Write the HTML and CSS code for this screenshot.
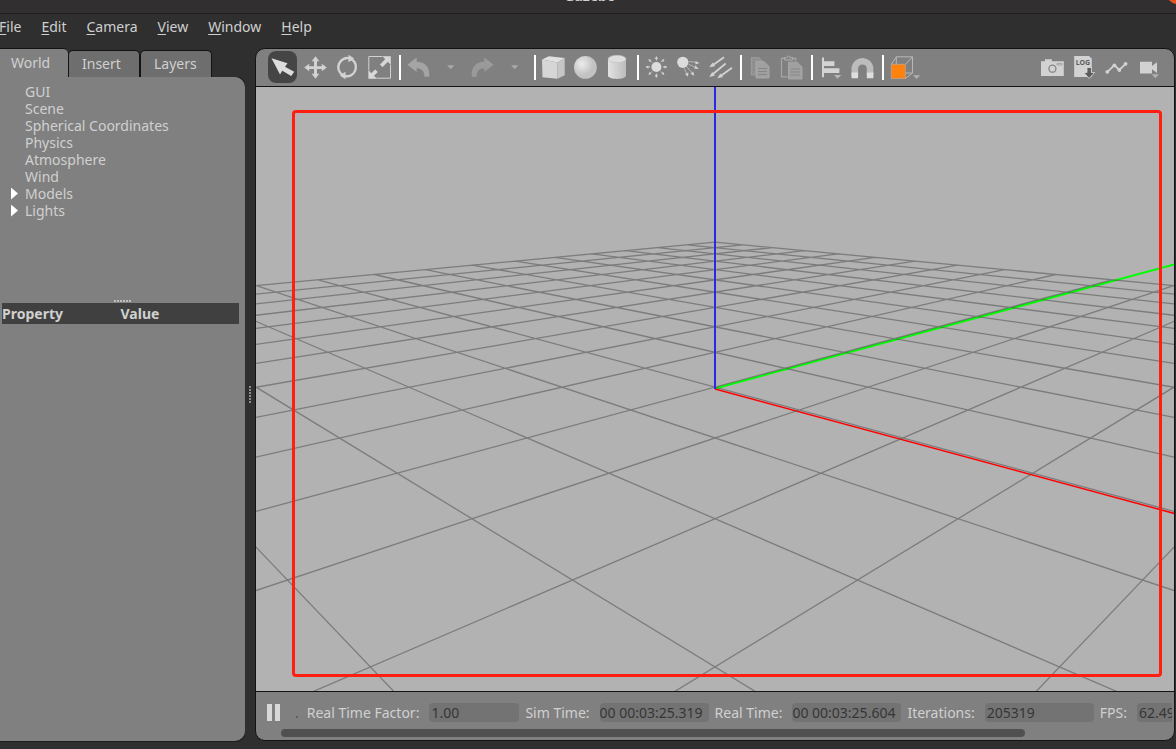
FILE: index.html
```html
<!DOCTYPE html>
<html lang="en">

<head>
    <meta charset="utf-8">
    <meta name="viewport" content="width=device-width, initial-scale=1.0">
    <title>Gazebo</title>
    <link rel="stylesheet" href="styles.css">
</head>

<body>
    <header class="titlebar">
        <span class="title">Gazebo</span>
        <button class="close" aria-label="Close"></button>
    </header>

    <nav class="menubar">
        <button><u>F</u>ile</button>
        <button><u>E</u>dit</button>
        <button><u>C</u>amera</button>
        <button><u>V</u>iew</button>
        <button><u>W</u>indow</button>
        <button><u>H</u>elp</button>
    </nav>

    <div class="workspace">
        <aside class="sidebar">
            <div class="tabs" role="tablist">
                <button class="tab active" role="tab" aria-selected="true">World</button>
                <button class="tab" role="tab" aria-selected="false">Insert</button>
                <button class="tab" role="tab" aria-selected="false">Layers</button>
            </div>
            <div class="panel">
                <ul class="tree">
                    <li><button>GUI</button></li>
                    <li><button>Scene</button></li>
                    <li><button>Spherical Coordinates</button></li>
                    <li><button>Physics</button></li>
                    <li><button>Atmosphere</button></li>
                    <li><button>Wind</button></li>
                    <li><button class="folder">Models</button></li>
                    <li><button class="folder">Lights</button></li>
                </ul>
                <div class="grip"></div>
                <table class="properties">
                    <thead>
                        <tr><th class="name">Property</th><th>Value</th></tr>
                    </thead>
                </table>
            </div>
        </aside>

        <div class="splitter"></div>

        <main class="viewer">
            <div class="toolbar">
                <button class="tool selected" aria-label="Select">
                    <svg viewBox="0 0 32 32"><path d="M4.5 7.3L20.5 12.3L18 15.8L27.2 20.8L24.2 25L15.3 19.8L13 23.5Z" fill="#dcdcdc"/></svg>
                </button>
                <button class="tool" aria-label="Translate">
                    <svg viewBox="0 0 32 32"><path d="M16.5 5.3L20.3 10.3H18V15.2H22.8V12.8L27.8 16.5L22.8 20.3V18H18V22.8H20.3L16.5 27.8L12.7 22.8H15V18H10.2V20.3L5.2 16.5L10.2 12.8V15.2H15V10.3H12.7Z" fill="#d2d2d2"/></svg>
                </button>
                <button class="tool" aria-label="Rotate">
                    <svg viewBox="0 0 32 32"><path d="M11.5 24A9.2 9.2 0 0 1 18.5 7.3M20.5 8.2A9.2 9.2 0 0 1 13.5 25" fill="none" stroke="#d2d2d2" stroke-width="2.4"/><path d="M17.5 3.8L23.2 7.5L17.5 11.3ZM14.5 20.8L8.8 24.5L14.5 28.2Z" fill="#d2d2d2"/></svg>
                </button>
                <button class="tool" aria-label="Scale">
                    <svg viewBox="0 0 32 32"><path d="M5.8 5.5H27.5V27.2H5.8Z" fill="none" stroke="#d2d2d2"/><path d="M28 5V14.2L24.8 11L19.5 16.2L16.8 13.5L22 8.2L18.8 5ZM5.2 28V18.8L8.4 22L12.2 18.2L15 21L11.2 24.8L14.4 28Z" fill="#d8d8d8" stroke="#808080" stroke-width=".4"/></svg>
                </button>
                <span class="line"></span>
                <button class="tool dim" aria-label="Undo">
                    <svg viewBox="0 0 32 32"><path d="M5.3 13.8L14.7 6.5V10.7C22.5 10.7 28 15.5 27.3 25.7H22.4C22.4 20 19.5 17.2 14.7 17.2V21Z" fill="#a4a4a4"/></svg>
                </button>
                <button class="tool" aria-label="Undo history">
                    <svg viewBox="0 0 32 32"><path d="M13 14.2H20.4L16.7 18.2Z" fill="#a8a8a8"/></svg>
                </button>
                <button class="tool dim" aria-label="Redo">
                    <svg viewBox="0 0 32 32"><path d="M27.7 13.8L18.3 6.5V10.7C10.5 10.7 5 15.5 5.7 25.7H10.6C10.6 20 13.5 17.2 18.3 17.2V21Z" fill="#9a9a9a"/></svg>
                </button>
                <button class="tool" aria-label="Redo history">
                    <svg viewBox="0 0 32 32"><path d="M13 14.2H20.4L16.7 18.2Z" fill="#a8a8a8"/></svg>
                </button>
                <span class="line"></span>
                <button class="tool" aria-label="Box">
                    <svg viewBox="0 0 32 32"><path d="M5 8.5L12 5.3L27.7 7L20.5 11.5Z" fill="#e0e0e0"/><path d="M5 8.5L20.5 11.5V27.8L5.5 26.3Z" fill="#d6d6d6"/><path d="M20.5 11.5L27.7 7V24.3L20.5 27.8Z" fill="#c6c6c6"/></svg>
                </button>
                <button class="tool" aria-label="Sphere">
                    <svg viewBox="0 0 32 32"><defs><radialGradient id="ball" cx=".35" cy=".35"><stop offset="0" stop-color="#ececec"/><stop offset="1" stop-color="#c2c2c2"/></radialGradient></defs><circle cx="16.4" cy="16.4" r="11.4" fill="url(#ball)"/></svg>
                </button>
                <button class="tool" aria-label="Cylinder">
                    <svg viewBox="0 0 32 32"><defs><linearGradient id="can"><stop offset="0" stop-color="#e2e2e2"/><stop offset="1" stop-color="#bcbcbc"/></linearGradient></defs><path d="M7 8V24.5C7 29 25 29 25 24.5V8Z" fill="url(#can)"/><ellipse cx="16" cy="8" rx="9" ry="3.7" fill="#dedede" stroke="#bdbdbd" stroke-width=".6"/></svg>
                </button>
                <span class="line"></span>
                <button class="tool" aria-label="Point light">
                    <svg viewBox="0 0 32 32"><circle cx="16.4" cy="16" r="5" fill="#dcdcdc"/><path d="M16.4 9.5V6M16.4 22.5V26M9.9 16H6.4M22.9 16H26.4M11.8 11.4L9.6 9.2M21 11.4L23.2 9.2M11.8 20.6L9.6 22.8M21 20.6L23.2 22.8" stroke="#d2d2d2" stroke-width="1"/><path d="M16.4 5L18 8H14.8ZM16.4 27L18 24H14.8ZM5.4 16L8.4 14.4V17.6ZM27.4 16L24.4 14.4V17.6ZM8.4 8L11.4 9L9.4 11ZM24.4 8L21.4 9L23.4 11ZM8.4 24L11.4 23L9.4 21ZM24.4 24L21.4 23L23.4 21Z" fill="#d2d2d2"/></svg>
                </button>
                <button class="tool" aria-label="Spot light">
                    <svg viewBox="0 0 32 32"><circle cx="10.8" cy="11.3" r="5.6" fill="#dcdcdc"/><path d="M17 10.5L24 11.3M16.5 13.2L23.5 16.4M14.8 15.8L20 21.7M12.3 17.4L14.7 22.5" stroke="#c4c4c4" stroke-width=".8"/><path d="M27.5 12L23.5 10V13.6ZM26.8 18L23.5 14.4L22.2 17.8ZM22.3 24.8L21.3 20.4L18.4 22.8ZM16 25.8L16.4 21.5L13 23Z" fill="#d2d2d2"/></svg>
                </button>
                <button class="tool" aria-label="Directional light">
                    <svg viewBox="0 0 32 32"><path d="M20 6.3L9 14M21.7 12.5L9 23M28 16.7L17 24.7" stroke="#d2d2d2" stroke-width="1.8"/><path d="M5.2 16.3L8.6 11.6L11 15.2ZM5.2 26L8.2 21L11 24.5ZM13.2 27.3L16.4 22.4L19 26Z" fill="#d2d2d2"/></svg>
                </button>
                <span class="line"></span>
                <button class="tool" aria-label="Copy">
                    <svg viewBox="0 0 32 32"><path d="M8.3 6.7H16L21 11.5V24H8.3Z" fill="#919191" stroke="#a2a2a2" stroke-width=".8"/><path d="M13 10.7H21L26 15.5V27H13Z" fill="#a0a0a0" stroke="#acacac" stroke-width=".8"/><path d="M10 11.5H12M10 15H12M10 18.5H12M15 17.5H24M15 20.5H24M15 23.5H24" stroke="#868686" stroke-width="1"/></svg>
                </button>
                <button class="tool" aria-label="Paste">
                    <svg viewBox="0 0 32 32"><path d="M12.5 25.8H6.5V7.3H10.5M17 7.3H20.8V10" fill="none" stroke="#a6a6a6" stroke-width="1.2"/><path d="M9.5 9V6.5H11.5Q13.5 3.8 15.8 6.5H18V9Z" fill="#858585" stroke="#adadad" stroke-width="1"/><path d="M13.5 11.2H22L27 16V28H13.5Z" fill="#a0a0a0" stroke="#acacac" stroke-width=".8"/><path d="M15.5 18H25M15.5 21H25M15.5 24H25" stroke="#868686" stroke-width="1"/></svg>
                </button>
                <span class="line"></span>
                <button class="tool" aria-label="Align">
                    <svg viewBox="0 0 32 32"><path d="M8 6.5H10V10.3H20.4V15H10V17.3H25.4V22H10V26.3H8Z" fill="#d4d4d4"/><path d="M20 24H27.3L23.6 27.8Z" fill="#b8b8b8"/></svg>
                </button>
                <button class="tool" aria-label="Snap">
                    <svg viewBox="0 0 32 32"><path d="M8.8 24V17A7.7 7.7 0 0 1 24.1 17V24" fill="none" stroke="#bcbcbc" stroke-width="6.6"/><path d="M5.5 21.5H12.1V27.3H5.5ZM20.8 21.5H27.4V27.3H20.8Z" fill="#dedede"/></svg>
                </button>
                <span class="line"></span>
                <button class="tool wide" aria-label="View angle">
                    <svg viewBox="0 0 40 32"><path d="M11.3 5.8H27.5V22H11.3ZM6.3 13.5L11.3 5.8M20.3 13.5L27.5 5.8M20.3 27.5L27.5 22" fill="none" stroke="#bdbdbd" stroke-width=".9"/><path d="M6.2 13.3H20.4V27.6H6.2Z" fill="#ff820f" stroke="#b9b0a8" stroke-width=".6"/><path d="M28 24.2H35.2L31.6 28Z" fill="#b0b0b0"/></svg>
                </button>

                <button class="tool first-right" aria-label="Screenshot">
                    <svg viewBox="0 0 32 32"><path d="M5 10.2H9V8.3H15.8V10.2H27.8V25H5Z" fill="#d2d2d2"/><circle cx="16.4" cy="17.7" r="3.5" fill="none" stroke="#858585" stroke-width="1.3"/><path d="M21 12.4H26V14H21Z" fill="none" stroke="#949494" stroke-width=".7"/></svg>
                </button>
                <button class="tool" aria-label="Log data">
                    <svg viewBox="0 0 32 32"><path d="M6.2 5H21L23.8 7.8V26H6.2Z" fill="#d2d2d2"/><text x="7.8" y="13.8" class="log">LOG</text><path d="M19 16.5H23.4V21.5H26.6L21.2 27.5L15.8 21.5H19Z" fill="#5c5c5c" stroke="#dcdcdc" stroke-width=".8"/></svg>
                </button>
                <button class="tool" aria-label="Plot">
                    <svg viewBox="0 0 32 32"><path d="M7.3 20.8L14.4 14.3L19.3 19L25.6 12.8" fill="none" stroke="#d2d2d2" stroke-width="1.8"/><g fill="#d2d2d2"><circle cx="7.3" cy="20.8" r="1.9"/><circle cx="14.4" cy="14.3" r="1.9"/><circle cx="19.3" cy="19" r="1.9"/><circle cx="25.6" cy="12.8" r="1.9"/></g></svg>
                </button>
                <button class="tool" aria-label="Record video">
                    <svg viewBox="0 0 32 32"><path d="M8 10.8H20V15L25 11.3V22L20 18.3V22.4H8Z" fill="#d2d2d2"/><path d="M19.6 23.3H27L23.3 27.2Z" fill="#b0b0b0"/></svg>
                </button>
            </div>

            <div class="scene">
                <svg class="world" viewBox="0 0 918 604" preserveAspectRatio="xMidYMid slice">
                    <path class="axis-y" d="M459 301.500L927 175"/>
                    <path class="axis-x" d="M459 302L927 428.800"/>
                    <path class="ground"/>
                    <path class="axis-z" d="M459 0V302"/>
                </svg>
                <div class="highlight"></div>
            </div>

            <div class="statusbar">
                <div class="status">
                    <button class="pause" aria-label="Pause"></button>
                    <span class="more">.</span>
                    <label for="factor">Real Time Factor:</label>
                    <input id="factor" class="short" value="1.00" readonly>
                    <label for="sim">Sim Time:</label>
                    <input id="sim" class="time" value="00 00:03:25.319" readonly>
                    <label for="real">Real Time:</label>
                    <input id="real" class="time" value="00 00:03:25.604" readonly>
                    <label for="iterations">Iterations:</label>
                    <input id="iterations" value="205319" readonly>
                    <label for="fps">FPS:</label>
                    <input id="fps" value="62.49" readonly>
                </div>
                <div class="scroll"></div>
            </div>
        </main>
    </div>

    <script>
        // camera looks along the diagonal of the ground plane
        const centerX = 459;
        const horizon = 77;
        const distance = 5.394;
        const size = 10;

        function project(i, j) {
            const depth = distance + (i + j) / 2;
            const x = centerX + 412.5 * (i - j) / depth;
            const y = horizon + 1204 / depth;
            return x.toFixed(1) + " " + y.toFixed(1);
        }

        function drawGround() {
            let d = "";
            for (let i = -size; i <= size; i++) {
                // stay in front of the camera
                const near = Math.max(-size, -9.6 - i);
                d += `M${project(i, near)}L${project(i, size)}`;
                d += `M${project(near, i)}L${project(size, i)}`;
            }
            document.querySelector(".ground").setAttribute("d", d);
        }

        drawGround();
    </script>
</body>

</html>
```

FILE: styles.css
```css
* {
    box-sizing: border-box;
}

body {
    display: flex;
    flex-direction: column;
    height: 100vh;
    margin: 0;
    overflow: hidden;
    background-color: #2f2f2f;
    color: #d0d0d0;
    font-family: "Noto Sans", "Open Sans", sans-serif;
    font-size: 14px;
}

button,
input {
    padding: 0;
    border: 0;
    background: none;
    color: inherit;
    font: inherit;
}

/* title bar */
.titlebar {
    position: relative;
    display: flex;
    justify-content: center;
    align-items: flex-start;
    flex: none;
    height: 14px;
    padding-left: 4px;
    overflow: hidden;
    background-color: #322f30;
    border-bottom: 1px solid #1e1e1e;
}

.title {
    margin-top: -14px;
    font-weight: bold;
    line-height: 20px;
}

.close {
    position: absolute;
    top: -16px;
    right: -11px;
    width: 20px;
    height: 20px;
    border-radius: 50%;
    background-color: #e95420;
}

/* menu */
.menubar {
    display: flex;
    flex: none;
    gap: 20px;
    height: 34px;
    margin-left: -1px;
}

.menubar button {
    height: 26px;
    line-height: 26px;
}

.menubar u {
    text-underline-offset: 2px;
}

.workspace {
    display: flex;
    flex: 1;
    min-height: 0;
    padding: 0 1px 8px 0;
}

/* left side */
.sidebar {
    display: flex;
    flex-direction: column;
    flex: none;
    width: 245px;
}

.tabs {
    display: flex;
    align-items: flex-end;
    height: 29px;
}

.tab {
    width: 72px;
    height: 27px;
    padding: 0 0 2px 13px;
    border: 1px solid #131313;
    border-bottom: 0;
    border-radius: 5px 5px 0 0;
    background-color: #6e6e6e;
    text-align: left;
}

.tab.active {
    width: 68px;
    height: 29px;
    padding-left: 11px;
    border-width: 1px 0 0;
    border-radius: 0 5px 0 0;
    background-color: #808080;
}

.panel {
    display: flex;
    flex-direction: column;
    flex: 1;
    border-radius: 0 10px 10px 0;
    background-color: #808080;
    box-shadow: 0 0 0 1px #1e1e1e;
    clip-path: inset(0 0 -1px 0);
}

.tree {
    height: 223px;
    margin: 0;
    padding: 6px 0 0 10px;
    list-style: none;
}

.tree li {
    height: 17px;
}

.tree button {
    display: flex;
    align-items: center;
    height: 17px;
    line-height: 17px;
}

.tree button::before {
    content: "";
    width: 7px;
    height: 12px;
    margin: 0 7px 0 1px;
}

.tree .folder::before {
    background-color: #fff;
    clip-path: polygon(0 0, 100% 50%, 0 100%);
}

.grip {
    width: 18px;
    height: 2px;
    margin: 0 auto 1px;
    background: repeating-linear-gradient(100deg, #bdbdbd 0 2px, #808080 2px 3px);
}

.properties {
    margin: 0 6px 0 2px;
    border-spacing: 0;
    table-layout: fixed;
    background-color: #404040;
}

.properties th {
    height: 21px;
    padding: 0;
    line-height: 21px;
    text-align: left;
}

.properties .name {
    width: 50%;
}

.splitter {
    display: flex;
    align-items: center;
    justify-content: center;
    flex: none;
    width: 10px;
}

.splitter::before {
    content: "";
    width: 2px;
    height: 18px;
    background: repeating-linear-gradient(#8a8a8a 0 2px, #2f2f2f 2px 3px);
}

/* 3D view */
.viewer {
    display: flex;
    flex-direction: column;
    flex: 1;
    min-width: 0;
    overflow: hidden;
    border: 1px solid #131313;
    border-radius: 10px;
    background-color: #808080;
}

.toolbar {
    display: flex;
    flex: none;
    height: 38px;
    padding: 2px 10px 0 11px;
    border-bottom: 1px solid #131313;
}

.tool {
    flex: none;
    width: 32px;
    height: 32px;
}

.tool.wide {
    width: 40px;
}

.tool.selected {
    border-radius: 8px;
    background-color: #454545;
    clip-path: inset(0 2px 0 1px round 8px);
}

.tool svg {
    display: block;
    width: 100%;
    height: 100%;
}

.first-right {
    margin-left: auto;
}

.log {
    fill: #5c5c5c;
    font-size: 7px;
    font-weight: bold;
}

.line {
    flex: none;
    width: 2px;
    height: 25px;
    margin: 4px 1px 0 4px;
    background-color: #fff;
}

.scene {
    position: relative;
    flex: 1;
    min-height: 0;
    background-color: #b2b2b2;
}

.world {
    display: block;
    width: 100%;
    height: 100%;
    fill: none;
}

.ground {
    stroke: #505050;
    stroke-opacity: .55;
    stroke-width: 1.3;
}

.axis-x {
    stroke: #f00;
    stroke-width: 1.5;
}

.axis-y {
    stroke: #0f0;
    stroke-width: 2;
}

.axis-z {
    stroke: #2828e6;
    stroke-width: 2;
}

.highlight {
    position: absolute;
    inset: 23px 12px 14px 36px;
    border: 3px solid #ff1e10;
    border-radius: 4px;
}

/* simulation status */
.statusbar {
    flex: none;
    height: 49px;
    padding: 10px 0 0 11px;
    border-top: 1px solid #131313;
    overflow: hidden;
}

.status {
    display: flex;
    align-items: center;
    gap: 6px;
    height: 20px;
    margin-right: 2px;
    overflow: hidden;
    white-space: nowrap;
}

.status label {
    margin-right: 4px;
}

.pause {
    flex: none;
    width: 13px;
    height: 17px;
    background: linear-gradient(90deg, #d8d8d8 5px, transparent 5px 8px, #d8d8d8 8px);
}

.more {
    margin: 0 2px 0 9px;
    color: #505050;
}

.status input {
    flex: none;
    width: 109px;
    height: 19px;
    padding-left: 2px;
    border-radius: 4px;
    background-color: #737373;
    color: #363636;
}

.status .short {
    width: 90px;
}

.status .time {
    padding-left: 0;
}

.scroll {
    width: 82%;
    height: 8px;
    margin: 7px 0 0 14px;
    border-radius: 4px;
    background-color: #505050;
}
```
